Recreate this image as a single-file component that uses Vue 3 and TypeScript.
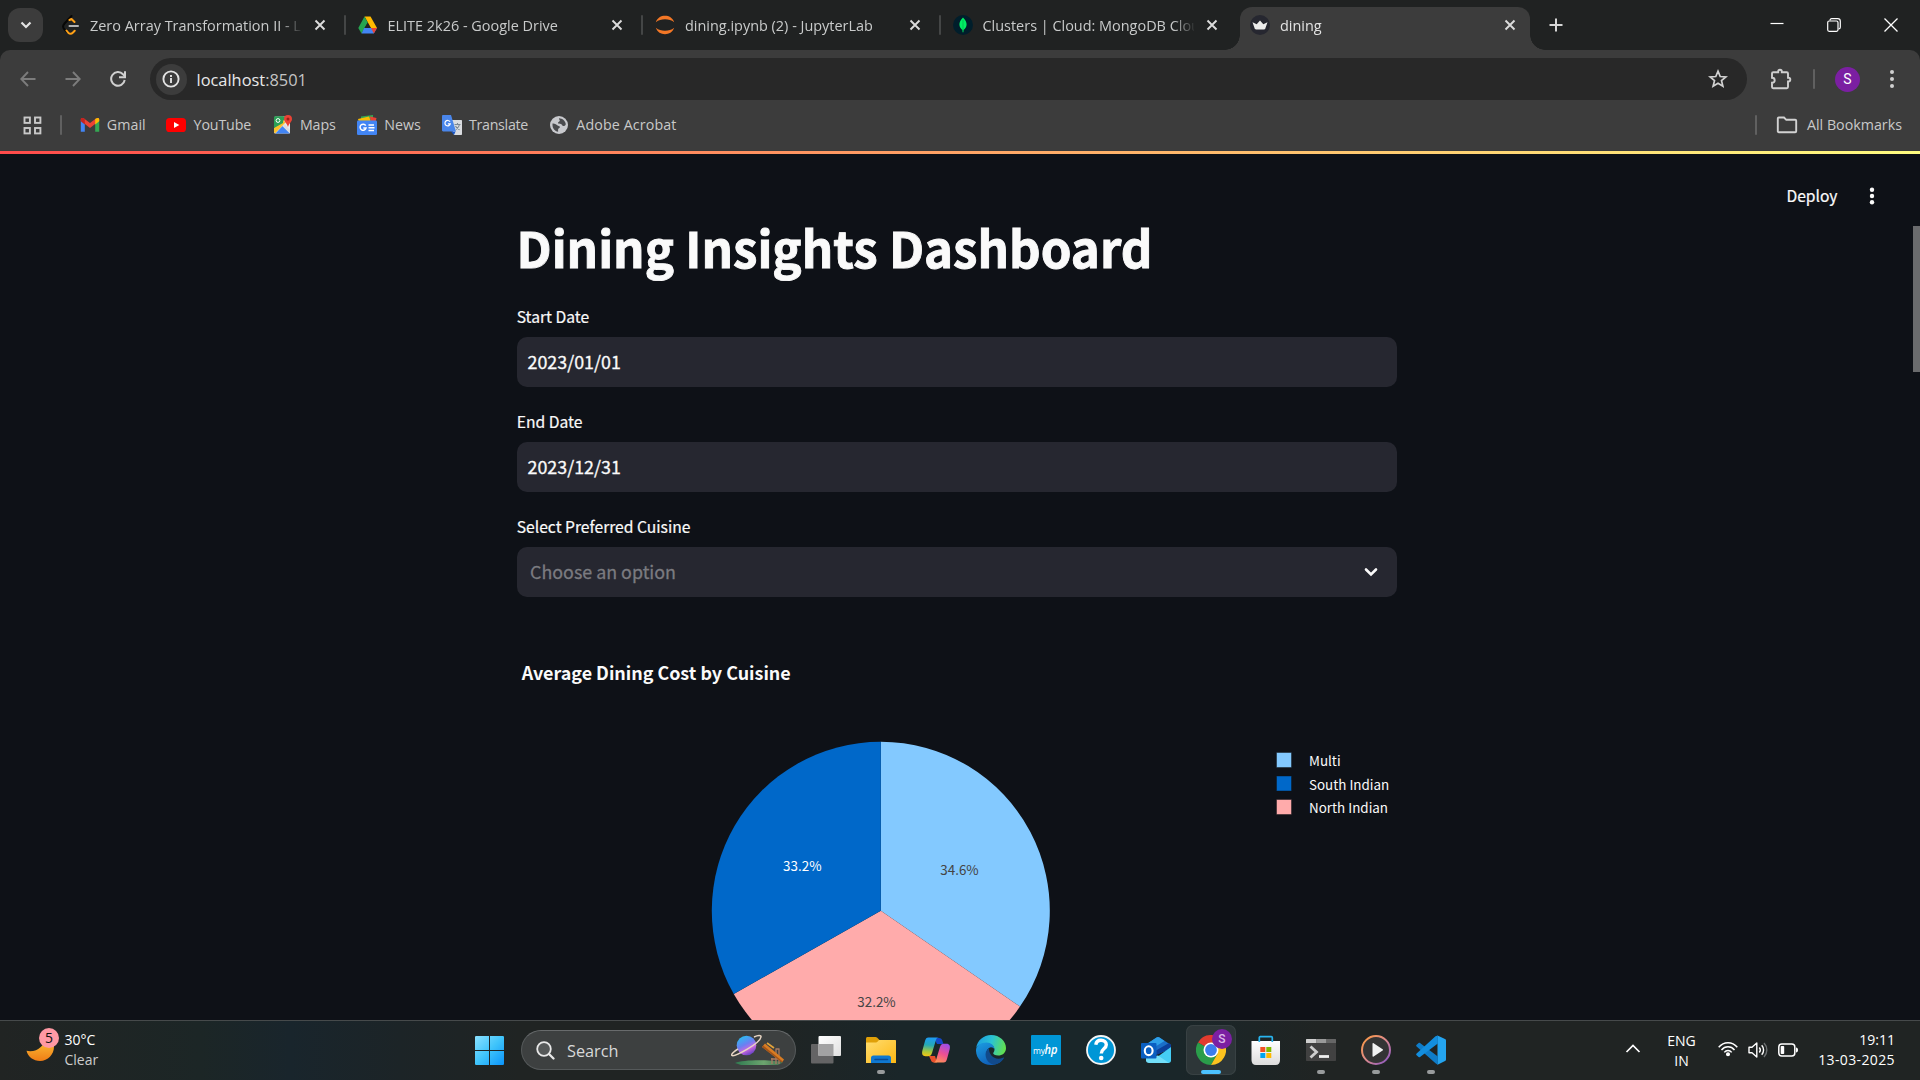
<script setup lang="ts">
interface Tab { icon: string; title: string; active?: boolean; divider?: boolean }
interface Bookmark { icon: string; label: string; width: number; spacing: number }
interface Slice { name: string; share: number; color: string; text: string; lx: number; ly: number }

const tabs: Tab[] = [
  { icon: 'leetcode', title: 'Zero Array Transformation II - LeetCode', divider: true },
  { icon: 'drive', title: 'ELITE 2k26 - Google Drive', divider: true },
  { icon: 'jupyter', title: 'dining.ipynb (2) - JupyterLab', divider: true },
  { icon: 'mongo', title: 'Clusters | Cloud: MongoDB Cloud' },
  { icon: 'crown', title: 'dining', active: true },
]

const bookmarks: Bookmark[] = [
  { icon: 'gmail', label: 'Gmail', width: 59.5, spacing: 0.05 },
  { icon: 'youtube', label: 'YouTube', width: 79, spacing: -0.15 },
  { icon: 'maps', label: 'Maps', width: 57, spacing: -0.1 },
  { icon: 'news', label: 'News', width: 57.5, spacing: 0 },
  { icon: 'translate', label: 'Translate', width: 80, spacing: -0.3 },
  { icon: 'globe', label: 'Adobe Acrobat', width: 110, spacing: 0.12 },
]

const dates = [
  { label: 'Start Date', value: '2023/01/01' },
  { label: 'End Date', value: '2023/12/31' },
]

const cx = 880.8
const cy = 910.7
const radius = 169

const slices: Slice[] = [
  { name: 'Multi', share: 0.346, color: '#83c9ff', text: '#444444', lx: 959.5, ly: 875 },
  { name: 'North Indian', share: 0.322, color: '#ffabab', text: '#444444', lx: 876.5, ly: 1007 },
  { name: 'South Indian', share: 0.332, color: '#0068c9', text: '#ffffff', lx: 802.3, ly: 871 },
]

const point = (f: number) => {
  const a = f * Math.PI * 2
  return `${(cx + radius * Math.sin(a)).toFixed(2)} ${(cy - radius * Math.cos(a)).toFixed(2)}`
}
let start = 0
const wedges = slices.map((s) => {
  const d = `M${cx} ${cy}L${point(start)}A${radius} ${radius} 0 0 1 ${point(start + s.share)}Z`
  start += s.share
  return { ...s, d, label: (s.share * 100).toFixed(1) + '%' }
})
const legend = [slices[0], slices[2], slices[1]]

const apps = [
  { name: 'taskview' }, { name: 'explorer', open: true }, { name: 'copilot' }, { name: 'edge' },
  { name: 'myhp' }, { name: 'help' }, { name: 'outlook' }, { name: 'chrome', active: true },
  { name: 'store' }, { name: 'terminal', open: true }, { name: 'media', open: true }, { name: 'vscode', open: true },
] as { name: string; open?: boolean; active?: boolean }[]
</script>

<template>
  <div class="screen">
    <div class="tabstrip">
      <button class="tabsearch">
        <svg width="12" height="12" viewBox="0 0 12 12"><path d="M1.5 3.5L6 8l4.500-4.500" fill="none" stroke="#e3e3e3" stroke-width="2.200" /></svg>
      </button>
      <div v-for="t in tabs" :key="t.title" class="tab" :class="{ active: t.active }">
        <svg class="fav" width="20" height="20" viewBox="0 0 20 20">
          <g v-if="t.icon === 'leetcode'" fill="none" stroke-linecap="round" stroke-linejoin="round" stroke-width="2">
            <path d="M11.500 1L4.500 8.500c-2 2.200-2 4 0 6L6.500 16.500" stroke="#070706" />
            <path d="M9.500 5l2-1 3 3M6.500 15.500l2 2.500c1.500 1.200 3 1 4.500-.5l1.700-1.700" stroke="#ffa116" />
            <path d="M9.500 11h8.500" stroke="#b3b3b3" />
          </g>
          <g v-else-if="t.icon === 'drive'">
            <path d="M6.500 1.500h6l6.500 11.500h-6z" fill="#ffba00" />
            <path d="M6.500 1.500l3.200 6L3.500 18.500.3 13z" fill="#25a550" />
            <path d="M6.200 13H19L15.800 18.500H3.500z" fill="#4285f4" />
            <path d="M13.100 13H19l-3.200 5.500z" fill="#ea4335" />
            <path d="M9.500 8L6.500 13h6z" fill="#202222" />
          </g>
          <g v-else-if="t.icon === 'jupyter'" fill="#f37726">
            <path d="M.8 7.200C2.500 2.700 6 .8 10 .8s7.500 1.900 9.200 6.400C16.500 5 13.500 4.200 10 4.200S3.500 5 .8 7.200z" />
            <path d="M.8 12.800c1.700 4.500 5.200 6.400 9.200 6.400s7.500-1.900 9.200-6.400c-2.700 2.200-5.700 3-9.200 3s-6.500-.8-9.200-3z" />
          </g>
          <g v-else-if="t.icon === 'mongo'">
            <circle cx="10" cy="10" r="10" fill="#001e2b" />
            <path d="M10 2.500c2.800 2.600 3.600 5 3.600 7 0 2.600-1.500 4.400-3.100 5.600L10.200 17.500h-.4L9.500 15.100C7.900 13.900 6.400 12.100 6.400 9.500c0-2 .8-4.400 3.600-7z" fill="#00ed64" />
            <path d="M10 5v12" stroke="#00b34b" stroke-width=".7" />
          </g>
          <g v-else>
            <circle cx="10" cy="10" r="10" fill="#262730" />
            <path d="M2.500 7.200l4.200 2L10 5.500l3.300 3.700 4.200-2-2.200 6.300c-.2.700-.6.900-1.200.9H5.900c-.6 0-1-.2-1.200-.9z" fill="#ececec" />
          </g>
        </svg>
        <span class="ttl">{{ t.title }}</span>
        <svg class="x" width="12" height="12" viewBox="0 0 12 12"><path d="M1.500 1.500l9 9M10.500 1.500l-9 9" stroke="#dcdcdc" stroke-width="1.900" /></svg>
        <i v-if="t.divider" class="div" />
      </div>
      <svg class="plus" width="14" height="14" viewBox="0 0 14 14"><path d="M7 .5v13M.5 7h13" stroke="#d6d6d6" stroke-width="2" /></svg>
      <div class="winctl">
        <svg width="14" height="14" viewBox="0 0 14 14"><path d="M.5 5.500h13" stroke="#fff" stroke-width="1.200" /></svg>
        <svg width="14" height="14" viewBox="0 0 14 14" fill="none" stroke="#fff" stroke-width="1.200"><rect x=".7" y="3" width="10.300" height="10.300" rx="1.500" /><path d="M3 2.500C3 1.300 3.700.7 4.700.7h6c1.700 0 2.600 1 2.600 2.600v6c0 1-.6 1.700-1.800 1.700" /></svg>
        <svg width="14" height="14" viewBox="0 0 14 14"><path d="M.5.5l13 13M13.500.5l-13 13" stroke="#fff" stroke-width="1.300" /></svg>
      </div>
    </div>

    <div class="chrome">
      <div class="toolbar">
        <svg class="nav" width="16" height="16" viewBox="0 0 16 16"><path d="M15.500 8H1.500M8 1L1.300 8 8 15" fill="none" stroke="#7c7c7c" stroke-width="1.900" /></svg>
        <svg class="nav" width="16" height="16" viewBox="0 0 16 16"><path d="M.5 8h14M8 1l6.700 7L8 15" fill="none" stroke="#7c7c7c" stroke-width="1.900" /></svg>
        <svg class="nav" width="16" height="16" viewBox="0 0 16 16"><path d="M14.700 9A6.800 6.800 0 1 1 13 3.300l2 2" fill="none" stroke="#d0d0d0" stroke-width="2" /><path d="M15 .3v6H9" fill="none" stroke="#d0d0d0" stroke-width="2" /></svg>
        <div class="omnibox">
          <span class="info">
            <svg width="18" height="18" viewBox="0 0 18 18"><circle cx="9" cy="9" r="7.600" fill="none" stroke="#e3e3e3" stroke-width="1.900" /><path d="M9 8v5M9 5v1.900" stroke="#e3e3e3" stroke-width="1.900" /></svg>
          </span>
          <span class="url">localhost<em>:8501</em></span>
          <svg class="star" width="20" height="20" viewBox="0 0 20 20"><path d="M10 2.200l2.200 5.300 5.700.4-4.400 3.700 1.400 5.600L10 14.200l-4.900 3 1.400-5.600L2.100 7.900l5.700-.4z" fill="none" stroke="#d2d2d2" stroke-width="1.700" /></svg>
        </div>
        <svg class="puzzle" width="22" height="22" viewBox="0 0 22 22"><path d="M3.200 4.200h5V3.500a1.800 1.800 0 0 1 3.600 0v.7h5c.7 0 1.200.5 1.200 1.200v4.300h.4a1.900 1.900 0 0 1 0 3.800H18V19c0 .7-.5 1.200-1.200 1.200H3.200C2.500 20.200 2 19.700 2 19v-4.300c1.500 0 2.700-1.100 2.700-2.500S3.500 9.700 2 9.700V5.400c0-.7.5-1.200 1.200-1.200z" fill="none" stroke="#cfcfcf" stroke-width="1.900" /></svg>
        <i class="bar" />
        <span class="avatar">S</span>
        <svg class="dots" width="6" height="22" viewBox="0 0 6 22" fill="#d0d0d0"><circle cx="3" cy="4" r="2" /><circle cx="3" cy="11" r="2" /><circle cx="3" cy="18" r="2" /></svg>
      </div>

      <div class="bookmarks">
        <svg class="grid" width="19" height="19" viewBox="0 0 19 19" fill="none" stroke="#c9c9c9" stroke-width="1.900"><rect x="1.500" y="1.500" width="5.400" height="5.400" /><rect x="12" y="1.500" width="5.400" height="5.400" /><rect x="1.500" y="12" width="5.400" height="5.400" /><rect x="12" y="12" width="5.400" height="5.400" /></svg>
        <i class="bar b1" />
        <div v-for="b in bookmarks" :key="b.label" class="bm">
          <svg width="20" height="20" viewBox="0 0 20 20">
            <g v-if="b.icon === 'gmail'">
              <path d="M.8 5v11.800h4V9z" fill="#4285f4" /><path d="M19.200 5v11.800h-4V9z" fill="#34a853" />
              <path d="M.8 4.500C.8 2.800 2.700 2.600 4 3.500L10 8l6-4.500c1.300-.9 3.200-.7 3.200 1v1.300L10 13 .8 5.800z" fill="#ea4335" />
              <path d="M15.200 4.100l.8-.6c1.300-.9 3.200-.7 3.200 1v1.700l-4 3.200z" fill="#fbbc04" /><path d="M.8 4.500C.8 3 2.400 2.500 4.800 4.100v5.300l-4-3.200z" fill="#c5221f" />
            </g>
            <g v-else-if="b.icon === 'youtube'"><rect y="3" width="20" height="14" rx="3.600" fill="#f00" /><path d="M8 7l5.300 3L8 13z" fill="#fff" /></g>
            <g v-else-if="b.icon === 'maps'">
              <rect x="1" y="1.500" width="16" height="17" rx="1.500" fill="#e8eaed" />
              <path d="M1 3c0-1 .5-1.500 1.500-1.500H15L1 16z" fill="#2b9f56" /><path d="M1 13L10 5l2.500 2.500L2 18.500 1 17z" fill="#fbc02d" />
              <path d="M2.500 18.500L9.500 11l7.500 7.500z" fill="#4285f4" /><path d="M9.500 11l2-2 5.500 6v3.500z" fill="#dadce0" />
              <path d="M1 3c0-1 .5-1.500 1.500-1.500H10V8L1 13z" fill="#2b9f56" />
              <circle cx="5" cy="5.500" r="1.900" fill="none" stroke="#fff" stroke-width="1" />
              <path d="M15 0a4 4 0 0 1 4 4c0 3-3 4-4 8-1-4-4-5-4-8a4 4 0 0 1 4-4z" fill="#ea4335" /><circle cx="15" cy="4" r="1.500" fill="#9c2018" />
            </g>
            <g v-else-if="b.icon === 'news'">
              <path d="M4 1.500L16 0v6H4z" fill="#34a853" /><path d="M1 4l11-2.500L14 7H2z" fill="#fbbc04" /><path d="M13 1.500l6.500 1.500-1 4H14z" fill="#ea4335" />
              <rect y="5.500" width="20" height="14.500" rx="1.300" fill="#4285f4" />
              <path d="M8.700 10.700A3 3 0 1 0 9 13H6.300" fill="none" stroke="#fff" stroke-width="1.500" /><path d="M11.500 10h5.500M11.500 12.800h6M11.500 15.500h5.500" stroke="#fff" stroke-width="1.400" />
            </g>
            <g v-else-if="b.icon === 'translate'">
              <path d="M7 5h12c.6 0 1 .4 1 1v13c0 .6-.4 1-1 1h-7z" fill="#dadce0" /><path d="M9 16.500l3 3.500 1.500-3.500z" fill="#1a56c4" />
              <path d="M1.200 0H9l5 16.500H1.200C.5 16.500 0 16 0 15.300V1.200C0 .5.500 0 1.200 0z" fill="#4a86ea" />
              <path d="M8 6.800A2.700 2.700 0 1 0 8.300 8.800H5.900" fill="none" stroke="#fff" stroke-width="1.200" />
              <path d="M12.500 9.500h6M15.500 8v1.500M17.500 9.500c-.5 2.500-2 4-3.500 5M13.500 11c.8 2 2.500 3 4 3.800" stroke="#7b8894" fill="none" stroke-width="1.100" />
            </g>
            <g v-else>
              <circle cx="10" cy="10" r="9" fill="#c8c9cd" />
              <path d="M3.500 8.500c2.200-.2 4 .8 5.500 2.300 1 .2 1.900.4 1.900 1.500 0 1-1.800 1-1.800 2v2.500c-3.200-.8-5.600-3-5.600-6.800zM10 3.200c3.500 0 6.500 2.800 6.800 6-.6 1.500-1.500 1.800-2.400 1.800-1.200 0-1.300-1.500-2.400-2-1.400-.6-3 .2-3-1.200 0-1 1.800-1.200 1.800-2.300 0-.8-1-1.200-.8-2.300z" fill="#4a4b4e" />
            </g>
          </svg>
          <span :style="{ width: b.width + 'px', letterSpacing: b.spacing + 'px' }">{{ b.label }}</span>
        </div>
        <i class="bar b2" />
        <svg class="folder" width="22" height="18" viewBox="0 0 22 18"><path d="M1.800 2.500c0-.6.400-1 1-1H8l2.300 2.300h8.900c.6 0 1 .4 1 1v10.400c0 .6-.4 1-1 1H2.800c-.6 0-1-.4-1-1z" fill="none" stroke="#d2d2d2" stroke-width="1.900" /></svg>
        <span class="all">All Bookmarks</span>
      </div>
    </div>
    <div class="decoration" />

    <main class="app">
      <div class="scroll" />
      <header>
        <span>Deploy</span>
        <svg width="6" height="20" viewBox="0 0 6 20" fill="#fafafa"><circle cx="3" cy="3.800" r="2.200" /><circle cx="3" cy="10" r="2.200" /><circle cx="3" cy="16.200" r="2.200" /></svg>
      </header>
      <section class="block">
        <h1>Dining Insights Dashboard</h1>
        <div v-for="d in dates" :key="d.label" class="field">
          <label>{{ d.label }}</label>
          <div class="input">{{ d.value }}</div>
        </div>
        <div class="field">
          <label>Select Preferred Cuisine</label>
          <div class="input select">
            <span>Choose an option</span>
            <svg width="14" height="10" viewBox="0 0 14 10"><path d="M2 2.500l5 5 5-5" fill="none" stroke="#fafafa" stroke-width="2.600" stroke-linecap="round" /></svg>
          </div>
        </div>
        <svg class="chart" width="880" height="383" viewBox="517 637 880 383">
          <text x="521.700" y="680" class="ctitle">Average Dining Cost by Cuisine</text>
          <path v-for="w in wedges" :key="w.name" :d="w.d" :fill="w.color" />
          <text v-for="w in wedges" :key="w.label" :x="w.lx" :y="w.ly" :fill="w.text" class="pct" :class="{ light: w.text === '#ffffff' }">{{ w.label }}</text>
          <g v-for="(l, i) in legend" :key="l.name">
            <rect x="1276.500" :y="752.500 + i * 23.500" width="15" height="15" :fill="l.color" stroke="#0e1117" stroke-opacity=".45" />
            <text x="1309" :y="766 + i * 23.500" class="leg">{{ l.name }}</text>
          </g>
        </svg>
      </section>
    </main>

    <footer class="taskbar">
      <div class="weather">
        <svg width="34" height="36" viewBox="0 0 34 36">
          <defs><linearGradient id="moon" x1="0" y1="0" x2="0" y2="1"><stop offset="0" stop-color="#ffd23f" /><stop offset="1" stop-color="#ef7d16" /></linearGradient></defs>
          <path d="M21 7c4 2 7 6 7 12.500C28 27.500 22 34 14 34 7.500 34 2 30 .5 23.800 9.500 26 19.500 20 21 7z" fill="url(#moon)" />
        </svg>
        <b>5</b>
        <div class="wtext"><span>30°C</span><span class="dim">Clear</span></div>
      </div>

      <svg class="start" width="29" height="29" viewBox="0 0 29 29">
        <defs><linearGradient id="win" x1="0" y1="0" x2="1" y2="1"><stop offset="0" stop-color="#8be1ff" /><stop offset=".5" stop-color="#3fc4fb" /><stop offset="1" stop-color="#0b94fb" /></linearGradient></defs>
        <path d="M.8 0H14v14H0V.8zM15 0h13.200l.8.8V14H15zM0 15h14v14H.8L0 28.200zM15 15h14v13.200l-.8.8H15z" fill="url(#win)" />
      </svg>

      <div class="search">
        <svg class="glass" width="19" height="19" viewBox="0 0 19 19"><circle cx="8" cy="8" r="6.800" fill="#ffffff22" stroke="#e8e8e8" stroke-width="1.800" /><path d="M13 13l4.500 4.500" stroke="#e8e8e8" stroke-width="2.300" stroke-linecap="round" /></svg>
        <span>Search</span>
        <svg class="art" width="54" height="32" viewBox="0 0 54 32">
          <defs>
            <linearGradient id="planet" x1=".2" y1="0" x2=".7" y2="1"><stop offset="0" stop-color="#22c4f0" /><stop offset=".45" stop-color="#6b7ff2" /><stop offset=".7" stop-color="#c868e0" /><stop offset="1" stop-color="#5b3dc0" /></linearGradient>
            <linearGradient id="hill"><stop offset="0" stop-color="#2f7a50" /><stop offset=".6" stop-color="#6da56f" /><stop offset="1" stop-color="#3f6a4d" /></linearGradient>
          </defs>
          <path d="M4 29c8-3.500 38-3.500 48-.5l-5 2.500H10z" fill="url(#hill)" />
          <circle cx="15.500" cy="11.500" r="9.800" fill="url(#planet)" />
          <path d="M7 15C2 18 0 20.500 1 21.500c2 2 28-12 29-18.500.3-2-3-1.700-7 0" fill="none" stroke="#e9d6c4" stroke-width="1.500" />
          <path d="M41 30v-6M48 30V15M45 30V15M40 25h9M44.500 15h4" stroke="#a87b62" stroke-width="1.300" fill="none" />
          <path d="M31 13l3-3.500L53 25.500l-2 3z" fill="#d97c22" /><path d="M31 13l1.200-1.400L51.800 27.500l-.8 1z" fill="#a3541a" /><path d="M36 9l7 5" stroke="#e2a33b" stroke-width="1.700" />
        </svg>
      </div>

      <div class="apps">
        <div v-for="a in apps" :key="a.name" class="app-btn" :class="{ active: a.active, open: a.open }">
          <svg width="30" height="30" viewBox="0 0 30 30">
            <g v-if="a.name === 'taskview'">
              <defs><linearGradient id="tv" x1="0" y1="0" x2="1" y2="1"><stop offset="0" stop-color="#fff" /><stop offset="1" stop-color="#e0e0e0" /></linearGradient></defs>
              <rect x="0" y="9" width="22.500" height="19.500" rx="1" fill="#646465" /><rect x="7.500" y="1" width="22.500" height="20" rx="1" fill="url(#tv)" /><path d="M7.500 9h15v12h-15z" fill="#a2a2a3" />
            </g>
            <g v-else-if="a.name === 'explorer'">
              <defs><linearGradient id="fold" x1="0" y1="0" x2="1" y2="1"><stop offset="0" stop-color="#ffdd70" /><stop offset="1" stop-color="#fdb813" /></linearGradient></defs>
              <path d="M0 3.500C0 2.700.7 2 1.500 2h8c.7 0 1 .2 1.500.6L13.500 5V10H0z" fill="#e0a008" />
              <path d="M0 7.500h9.500c1 0 1.500-.3 2.200-1l.8-1c.5-.4 1-.5 1.800-.5H29c.6 0 1 .4 1 1V28H0z" fill="url(#fold)" />
              <path d="M5 28v-5a2.500 2.500 0 0 1 2.500-2.500h15A2.500 2.500 0 0 1 25 23v5z" fill="#0f78d0" /><path d="M9 24.500h12.500" stroke="#0a4a94" stroke-width="1.500" stroke-linecap="round" />
            </g>
            <g v-else-if="a.name === 'copilot'">
              <defs>
                <linearGradient id="cpa" x1=".4" y1="0" x2=".3" y2="1"><stop offset="0" stop-color="#1d9bf4" /><stop offset=".4" stop-color="#25a8b5" /><stop offset=".75" stop-color="#a7c83d" /><stop offset="1" stop-color="#f4c613" /></linearGradient>
                <linearGradient id="cpb" x1=".7" y1="0" x2=".3" y2="1"><stop offset="0" stop-color="#a04de8" /><stop offset=".5" stop-color="#ee4f93" /><stop offset="1" stop-color="#ff9256" /></linearGradient>
              </defs>
              <path d="M13 3h5c2 0 2.800 1 3.300 2.600L22.500 9H16z" fill="#1447c7" />
              <path d="M8 21h6l2 6.500h-3c-2 0-2.600-1-3.200-2.700z" fill="#e8502c" />
              <path d="M7.500 2.500H18c-2 0-2.600 1-3.200 3L11 18c-.8 2.400-1.600 3.200-4 3.200H4.500C1.500 21.200.5 19 1.400 15.500L4 6c.7-2.400 1.500-3.500 3.500-3.500z" fill="url(#cpa)" />
              <path d="M22.500 27.500H12c2 0 2.600-1 3.200-3L19 12c.8-2.400 1.600-3.200 4-3.200h2.500c3 0 4 2.200 3.100 5.700L26 24c-.7 2.400-1.500 3.500-3.500 3.500z" fill="url(#cpb)" />
            </g>
            <g v-else-if="a.name === 'edge'">
              <defs>
                <linearGradient id="ega" x1="0" y1=".3" x2="1" y2=".5"><stop offset="0" stop-color="#1b9de2" /><stop offset=".5" stop-color="#2bc3d2" /><stop offset="1" stop-color="#63df4e" /></linearGradient>
                <linearGradient id="egb" x1="0" y1="0" x2=".6" y2="1"><stop offset="0" stop-color="#1b9de2" /><stop offset="1" stop-color="#0f5bb5" /></linearGradient>
              </defs>
              <path d="M.2 13C1.200 5.500 7.500 0 15 0c9 0 15 6.500 15 13 0 5-3.800 7.500-7.800 7.500-3.300 0-5-1.200-5-2.200 0-.8 1.300-1.500 1.300-3.800C18.500 11.500 15 8.500 10.500 8.500 5.500 8.500 1.500 10 .2 13z" fill="url(#ega)" />
              <path d="M0 15C.2 10.500 4.500 7.500 10.500 7.500c4.500 0 8 3 8 7-1-2-3.500-2.800-5.500-1.600C8.500 15.500 11 25 20 25.500c3 .2 5-.5 7-1.500C24.500 27.600 20.500 30 15 30 6.500 30-.2 23.500 0 15z" fill="url(#egb)" />
              <path d="M13 13c-6 3.500-4 14.500 4.500 16.800C22 29.200 25.700 26.800 27.800 23.500c.5-.8-.2-1.200-1-.8C19 26 12.500 20 13 13z" fill="#114a8b" />
            </g>
            <g v-else-if="a.name === 'myhp'">
              <rect width="30" height="30" rx="1" fill="#0096d6" />
              <text x="2" y="18.500" fill="#fff" font-family="Open Sans, sans-serif" font-size="8.500">my</text><text x="13.500" y="19" fill="#fff" font-family="Open Sans, sans-serif" font-style="italic" font-weight="600" font-size="13" textLength="13" lengthAdjust="spacingAndGlyphs">hp</text>
            </g>
            <g v-else-if="a.name === 'help'">
              <circle cx="15" cy="15" r="14" fill="#0096d6" stroke="#f5f5f5" stroke-width="1.800" />
              <path d="M9.800 9.800C10.200 7 12.300 5.300 15 5.300c3.300 0 5.300 1.800 5.300 4.400 0 4.300-5 4-5 8.800" fill="none" stroke="#fff" stroke-width="3.400" /><circle cx="15.200" cy="23" r="2.300" fill="#fff" />
            </g>
            <g v-else-if="a.name === 'outlook'">
              <path d="M5 9.500L15.500 2.600c1-.7 2-.7 3 0L30 10v4L8 22 5 20z" fill="#1a6fc9" /><path d="M15 15.500L28 8l2 2v3L15.500 20z" fill="#0b3f9a" /><path d="M5 9.500L15.500 2.600c1-.7 2-.7 3 0l5 3.300L12 13z" fill="#2d9fe8" />
              <path d="M30 12v13.500c0 1.500-1 2.500-2.500 2.500H8L30 12z" fill="#45cdf5" /><path d="M5 23l12-2.500L28 28H8c-1.800 0-3-1-3-2.500z" fill="#72def8" />
              <rect y="8" width="15.500" height="15.500" rx="1" fill="#0a5fc2" /><ellipse cx="7.700" cy="15.700" rx="3.900" ry="4.400" fill="none" stroke="#fff" stroke-width="2.100" />
            </g>
            <g v-else-if="a.name === 'chrome'">
              <path d="M15 15L2 7.500A15 15 0 0 1 28 7.500H15z" fill="#e23b2e" /><path d="M15 15l6.500 3.700L15 30A15 15 0 0 1 2 7.500z" fill="#2a9d4a" /><path d="M15 7.500h13A15 15 0 0 1 15 30l6.500-11.300z" fill="#fcc31e" />
              <circle cx="15" cy="15" r="7.500" fill="#fff" /><circle cx="15" cy="15" r="5.900" fill="#3b7ded" />
            </g>
            <g v-else-if="a.name === 'store'">
              <defs><linearGradient id="bag" x1="0" y1="0" x2="0" y2="1"><stop offset="0" stop-color="#fff" /><stop offset="1" stop-color="#dcdcdc" /></linearGradient></defs>
              <path d="M.5 6h28.500v19c0 3-1.500 5-4.500 5H5c-3 0-4.500-2-4.500-5z" fill="url(#bag)" /><path d="M8.300 7V2.700c0-.6.300-1 1-1h11c.6 0 1 .4 1 1V7" fill="none" stroke="#28b4ee" stroke-width="1.700" />
              <path d="M9.300 12h5v5h-5z" fill="#f25022" /><path d="M15.300 12h5v5h-5z" fill="#7fba00" /><path d="M9.300 18h5v5h-5z" fill="#00a4ef" /><path d="M15.300 18h5v5h-5z" fill="#ffb900" />
            </g>
            <g v-else-if="a.name === 'terminal'">
              <path d="M0 4h30v21c0 .6-.4 1-1 1H1c-.6 0-1-.4-1-1z" fill="#414141" /><path d="M0 5c0-.6.400-1 1-1h9.500v4H0z" fill="#cfcfcf" /><path d="M10.500 4h10v4h-10z" fill="#999" /><path d="M20.500 4H29c.6 0 1 .4 1 1v3h-9.500z" fill="#666" />
              <path d="M4.500 11.500l6 5.500-6 5.500" fill="none" stroke="#cecece" stroke-width="2.800" /><path d="M13 21.500h10" stroke="#eee" stroke-width="2.800" />
            </g>
            <g v-else-if="a.name === 'media'">
              <defs><linearGradient id="ring" x1="0" y1="0" x2="1" y2="1"><stop offset="0" stop-color="#ff9a3c" /><stop offset=".5" stop-color="#dc8a8e" /><stop offset="1" stop-color="#8251c8" /></linearGradient></defs>
              <circle cx="15" cy="15" r="14" fill="#343434" stroke="url(#ring)" stroke-width="2" /><path d="M11.500 8.800c0-.8.500-1 1.100-.6l9 6c.6.400.6 1 0 1.400l-9 6c-.6.400-1.100.2-1.100-.6z" fill="#f2f2f2" />
            </g>
            <g v-else>
              <path d="M21.500.5L29 4c.7.300 1 .8 1 1.500v19c0 .7-.3 1.200-1 1.500l-7.500 3.700z" fill="#24a4ef" />
              <path d="M.6 9.800L2.600 8c.4-.3.900-.3 1.400 0L21.800 21.500v8.200L19.800 28.500.6 11.500c-.6-.5-.6-1.200 0-1.700z" fill="#0f7cc8" />
              <path d="M.6 20.200L2.600 22c.4.300.9.300 1.400 0L21.800 8.500V.4L19.500 1.300.6 18.500c-.6.500-.6 1.200 0 1.700z" fill="#138ede" />
            </g>
          </svg>
          <b v-if="a.active" class="who">S</b>
        </div>
      </div>

      <div class="tray">
        <svg class="chev" width="16" height="10" viewBox="0 0 16 10"><path d="M1.500 8L8 1.500 14.500 8" fill="none" stroke="#fff" stroke-width="1.700" /></svg>
        <div class="lang"><span>ENG</span><span>IN</span></div>
        <svg class="wifi" width="20" height="16" viewBox="0 0 20 16" fill="none" stroke="#fff" stroke-width="1.500"><path d="M.7 6.300C5.800.3 14.200.3 19.300 6.300M3.500 8.900c3.500-4.200 9.500-4.200 13 0M6.300 11.400c2-2.500 5.400-2.500 7.400 0" /><circle cx="10" cy="13.300" r="1.300" fill="#fff" /></svg>
        <svg class="vol" width="20" height="18" viewBox="0 0 20 18" fill="none" stroke="#fff" stroke-width="1.400"><path d="M1 6.300h3L8.800 2v14L4 11.700H1z" stroke-linejoin="round" /><path d="M11.300 6.500c1.200 1.400 1.200 3.600 0 5M13.700 4.200c2.500 2.700 2.500 6.900 0 9.600" /><path d="M16 2c3.800 4 3.800 10 0 14" stroke="#6d7172" /></svg>
        <svg class="bat" width="20" height="14" viewBox="0 0 20 14"><rect x=".8" y="1" width="16" height="12" rx="3" fill="none" stroke="#fff" stroke-width="1.500" /><rect x="2.700" y="3" width="3.500" height="8" rx=".8" fill="#fff" /><path d="M18 4.500c1.400.3 2 1 2 2.500s-.6 2.200-2 2.500z" fill="#fff" /></svg>
        <div class="clock"><span>19:11</span><span class="date">13-03-2025</span></div>
      </div>
    </footer>
  </div>
</template>

<style>
html, body { margin: 0; background: #0e1117; overflow: hidden; }
</style>

<style scoped>
* { box-sizing: border-box; }
svg { display: block; flex: none; }
i { flex: none; }
.screen { width: 1920px; height: 1080px; display: flex; flex-direction: column; overflow: hidden; background: #202222; font-family: "Open Sans", "Noto Sans", sans-serif; }

.tabstrip { height: 50px; flex: none; display: flex; background: #202222; }
.tabsearch { width: 35px; height: 34px; margin: 8px 7px 0 8px; padding: 0; border: 0; border-radius: 12px; background: #3c3c3c; display: flex; align-items: center; justify-content: center; }
.tab { position: relative; width: 297.500px; height: 36px; margin-top: 7px; padding-left: 10px; display: flex; align-items: center; flex: none; font-size: 14.450px; color: #c9cbcb; }
.ttl { width: 211px; margin-left: 10px; white-space: nowrap; overflow: hidden; -webkit-mask-image: linear-gradient(90deg, #000 190px, transparent 213px); mask-image: linear-gradient(90deg, #000 190px, transparent 213px); }
.x { margin-left: 12.500px; }
.div { position: absolute; right: 2px; top: 8px; width: 2px; height: 20px; border-radius: 1px; background: #444646; }
.tab.active { width: 290px; height: 43px; padding-bottom: 7px; background: #3c3c3c; border-radius: 12px 12px 0 0; color: #e3e3e3; }
.tab.active::before, .tab.active::after { content: ""; position: absolute; bottom: 0; width: 15px; height: 15px; }
.tab.active::before { left: -15px; background: radial-gradient(circle at 0 0, transparent 14.500px, #3c3c3c 15px); }
.tab.active::after { right: -15px; background: radial-gradient(circle at 100% 0, transparent 14.500px, #3c3c3c 15px); }
.x, .fav { flex: none; }
.plus { margin: 18px 0 0 19px; }
.winctl { margin: 18px 22px 0 auto; display: flex; gap: 43px; }

.chrome { height: 101px; flex: none; background: #3c3c3c; border-radius: 10px 10px 0 0; }
.toolbar { height: 58px; display: flex; align-items: center; padding-left: 19.500px; }
.nav { margin-right: 29px; }
.omnibox { width: 1597px; height: 42px; margin-left: -4.500px; border-radius: 21px; background: #282828; display: flex; align-items: center; padding-left: 5.500px; flex: none; }
.info { width: 31px; height: 31px; border-radius: 50%; background: #3c3c3c; display: flex; align-items: center; justify-content: center; }
.url { margin: 1px 0 0 10px; font-size: 16.400px; color: #e8e8e8; }
.url em { font-style: normal; color: #c4c4c4; }
.star { margin: 0 19.500px 0 auto; }
.puzzle { margin: 0 0 1px 23px; }
.bar { width: 2px; height: 20px; border-radius: 1px; background: #606060; }
.toolbar .bar { margin-left: 20.500px; }
.avatar { width: 25px; height: 25px; margin-left: 20.500px; border-radius: 50%; background: #7b1fa2; color: #fff; font: 14px/25px Roboto, sans-serif; text-align: center; }
.dots { margin-left: 29px; }
.bookmarks { height: 34px; display: flex; align-items: center; padding-left: 23px; font-size: 14.250px; color: #c9c9c9; }
.b1 { margin: 0 18px 0 17.500px; }
.bm { display: flex; align-items: center; }
.bm span { margin: -2px 0 0 7.300px; white-space: nowrap; }
.b2 { margin-left: auto; }
.folder { margin: 0 9px 0 19px; }
.all { width: 113px; margin-top: -2px; white-space: nowrap; }
.decoration { height: 3px; flex: none; background: linear-gradient(90deg, #ff4b4b, #fffd80); }

.app { flex: 1; min-height: 0; position: relative; background: #0e1117; color: #fafafa; font-family: "Noto Sans CJK SC", "Noto Sans", sans-serif; overflow: hidden; -webkit-text-stroke: .2px; }
.scroll { position: absolute; right: 0; top: 72px; width: 7px; height: 146px; background: #6a6b6d; }
header { height: 63px; padding: 21px 45px 0 0; display: flex; justify-content: flex-end; align-items: center; gap: 31.500px; font-size: 15.630px; }
header span { margin-top: -2px; }
.block { width: 880px; margin-left: 517px; }
h1 { margin: 0 0 28px -.5px; height: 60px; font-size: 49.230px; line-height: 60px; font-weight: 700; white-space: nowrap; -webkit-text-stroke: .9px; }
.field { margin-bottom: 23px; }
label { display: block; height: 24px; margin: 0 0 8px -.3px; font-size: 15.660px; line-height: 23px; }
.input { height: 50px; padding-left: 10.500px; border-radius: 10px; background: #262730; font-size: 17.860px; line-height: 49px; -webkit-text-stroke: .3px; }
.select { padding: 0 19px 0 13px; display: flex; align-items: center; justify-content: space-between; color: #7b7b80; }
.select span { margin-top: -1.500px; }
.chart { margin-top: 40px; }
.ctitle { font-size: 17.920px; font-weight: 700; fill: #fafafa; -webkit-text-stroke: .3px #fafafa; }
.pct { font-size: 13.400px; text-anchor: middle; -webkit-text-stroke: 0; }
.pct.light { -webkit-text-stroke: .3px #fff; }
.leg { font-size: 13.420px; fill: #fafafa; -webkit-text-stroke: .3px #fafafa; }

.taskbar { height: 60px; flex: none; display: flex; align-items: flex-start; border-top: 1px solid #464a4b; color: #fff; font-size: 14px; background: linear-gradient(90deg, #212423 0, #1c2626 200px, #19252c 290px, #1c2427 400px, #202423 520px, #202423 760px, #1a2629 900px, #1a2629 1180px, #202423 1320px, #202423 1920px); }
.taskbar span { display: block; line-height: 20px; white-space: nowrap; }
.weather { position: relative; width: 475px; display: flex; padding: 8px 0 0 26px; }
.weather b { position: absolute; left: 39px; top: 7px; width: 20px; height: 20px; border-radius: 50%; background: #ff99a4; color: #111; font-weight: 400; line-height: 20px; text-align: center; }
.wtext { margin: 1px 0 0 4.500px; }
.dim { color: #ccc; }
.weather svg { margin-top: -2px; }
.start { margin-top: 15px; }
.search { width: 275px; height: 40px; margin: 9px 0 0 17px; border-radius: 20px; background: #3d4040; border: 1px solid #55595a; border-top-color: #686b6c; display: flex; align-items: center; padding-left: 14px; font-size: 16.300px; color: #d8d9d9; }
.search span { margin: 1px 0 0 12px; }
.art { margin-left: auto; margin-right: 10px; }
.apps { display: flex; margin-left: 3px; }
.app-btn { position: relative; width: 50px; height: 50px; margin: 4px 0 0 5px; padding: 10px; border-radius: 7px; }
.apps > :first-child { margin-left: 2px; }
.app-btn.active { background: #2d3638; box-shadow: inset 0 0 0 1px #384143; }
.app-btn.open::after, .app-btn.active::after { content: ""; position: absolute; left: 21px; bottom: 1px; width: 8px; height: 4px; border-radius: 2px; background: #989b9c; }
.app-btn.active::after { left: 15px; width: 20px; background: #4cc2ff; }
.who { position: absolute; left: 26px; top: 4px; width: 20px; height: 20px; border-radius: 50%; background: #7b1fa2; color: #dcb9ea; font: 500 12px/20px Roboto, sans-serif; text-align: center; }
.tray { flex: 1; display: flex; }
.chev { margin: 23px 0 0 auto; }
.lang { width: 29px; margin: 10px 0 0 26px; text-align: center; }
.wifi { margin: 20px 0 0 22px; }
.vol { margin: 20px 0 0 10px; }
.bat { margin: 22px 0 0 10px; }
.clock { width: 97px; margin: 9px 25px 0 0; text-align: right; }
.clock .date { letter-spacing: .38px; }
</style>
